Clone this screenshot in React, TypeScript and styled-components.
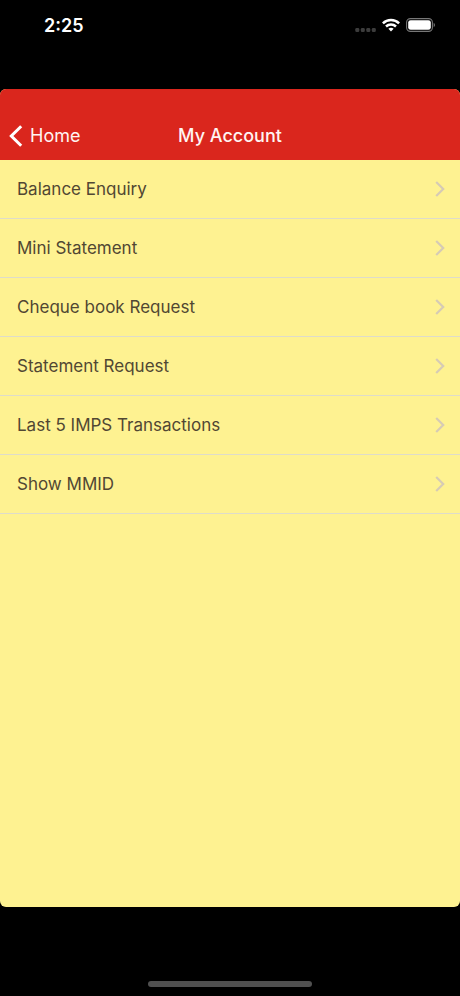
import React from "react";
import styled, { createGlobalStyle } from "styled-components";

const GlobalStyle = createGlobalStyle`
  *, *::before, *::after { box-sizing: border-box; }
  body {
    margin: 0;
    background: #000;
    font-family: Inter, "Liberation Sans", sans-serif;
  }
`;

const Screen = styled.div`
  display: flex;
  flex-direction: column;
  min-height: 100vh;
  background: #000;
`;

const StatusBar = styled.header`
  display: flex;
  justify-content: space-between;
  align-items: flex-start;
  height: 89px;
  padding: 15px 24px 0 44px;
  color: #fff;
`;

const Clock = styled.time`
  font-size: 18px;
  font-weight: 600;
  line-height: 22px;
`;

const StatusIcons = styled.div`
  display: flex;
  align-items: center;
  gap: 6px;
  height: 20px;
`;

const Panel = styled.main`
  flex: 1;
  display: flex;
  flex-direction: column;
  overflow: hidden;
  border-radius: 6px;
  background: #fef291;
`;

const NavBar = styled.nav`
  display: grid;
  grid-template-columns: 1fr auto 1fr;
  align-items: end;
  height: 71px;
  padding: 0 9px 12px;
  background: #da261d;
  color: #fff4f2;
`;

const BackButton = styled.button`
  display: flex;
  align-items: center;
  justify-self: start;
  gap: 7px;
  padding: 0;
  border: 0;
  background: none;
  color: inherit;
  font: inherit;
  font-size: 18px;
  line-height: 24px;
  cursor: pointer;
`;

const Title = styled.h1`
  margin: 0;
  font-size: 18px;
  font-weight: 500;
  line-height: 24px;
`;

const Menu = styled.ul`
  margin: 0;
  padding: 0;
  list-style: none;
`;

const MenuItem = styled.li`
  border-bottom: 1px solid #dedccb;
`;

const MenuButton = styled.button`
  display: flex;
  align-items: center;
  justify-content: space-between;
  width: 100%;
  height: 58px;
  padding: 0 15px 0 17px;
  border: 0;
  background: none;
  color: #514733;
  font: inherit;
  font-size: 17px;
  line-height: 24px;
  text-align: left;
  cursor: pointer;
`;

const HomeArea = styled.footer`
  display: flex;
  align-items: flex-end;
  justify-content: center;
  height: 89px;
  padding-bottom: 9px;
`;

const HomeIndicator = styled.div`
  width: 164px;
  height: 6px;
  border-radius: 3px;
  background: #505050;
`;

const items = [
  "Balance Enquiry",
  "Mini Statement",
  "Cheque book Request",
  "Statement Request",
  "Last 5 IMPS Transactions",
  "Show MMID",
];

function SignalIcon() {
  return (
    <svg width="21" height="18" viewBox="0 0 21 18" fill="#3c3c3c" aria-hidden="true">
      <rect x="0.3" y="12" width="4" height="4" rx="1.3" />
      <rect x="5.8" y="12" width="4" height="4" rx="1.3" />
      <rect x="11.3" y="12" width="4" height="4" rx="1.3" />
      <rect x="16.8" y="12" width="4" height="4" rx="1.3" />
    </svg>
  );
}

function WifiIcon() {
  return (
    <svg width="18" height="14" viewBox="0 0 18 14" fill="none" stroke="#fff" strokeWidth="2.5" aria-hidden="true">
      <path d="M0.9 5.3C5.4 0.8 12.6 0.8 17.1 5.3" />
      <path d="M4 8.5C6.8 5.8 11.2 5.8 14 8.5" />
      <path d="M9 13.4L6.4 10.8C7.9 9.4 10.1 9.4 11.6 10.8Z" fill="#fff" stroke="none" />
    </svg>
  );
}

function BatteryIcon() {
  return (
    <svg width="30" height="14" viewBox="0 0 30 14" aria-hidden="true">
      <rect x="0.6" y="0.6" width="25.8" height="12.8" rx="3.8" fill="none" stroke="#777" strokeWidth="1.1" />
      <rect x="2.2" y="2.2" width="22.6" height="9.6" rx="2.4" fill="#fff" />
      <path d="M27.7 4.8C29.4 5.5 29.4 8.5 27.7 9.2Z" fill="#777" />
    </svg>
  );
}

function BackIcon() {
  return (
    <svg width="14" height="22" viewBox="0 0 14 22" fill="none" stroke="#fff" strokeWidth="3" aria-hidden="true">
      <path d="M12.2 1.2L2.3 11L12.2 20.8" />
    </svg>
  );
}

function ChevronIcon() {
  return (
    <svg width="10" height="16" viewBox="0 0 10 16" fill="none" stroke="#d6cbb5" strokeWidth="2.2" aria-hidden="true">
      <path d="M1.2 1L8.2 8L1.2 15" />
    </svg>
  );
}

export default function App() {
  return (
    <Screen>
      <GlobalStyle />
      <StatusBar>
        <Clock>2:25</Clock>
        <StatusIcons>
          <SignalIcon />
          <WifiIcon />
          <BatteryIcon />
        </StatusIcons>
      </StatusBar>
      <Panel>
        <NavBar>
          <BackButton type="button">
            <BackIcon />
            Home
          </BackButton>
          <Title>My Account</Title>
        </NavBar>
        <Menu>
          {items.map((label) => (
            <MenuItem key={label}>
              <MenuButton type="button">
                {label}
                <ChevronIcon />
              </MenuButton>
            </MenuItem>
          ))}
        </Menu>
      </Panel>
      <HomeArea>
        <HomeIndicator />
      </HomeArea>
    </Screen>
  );
}
